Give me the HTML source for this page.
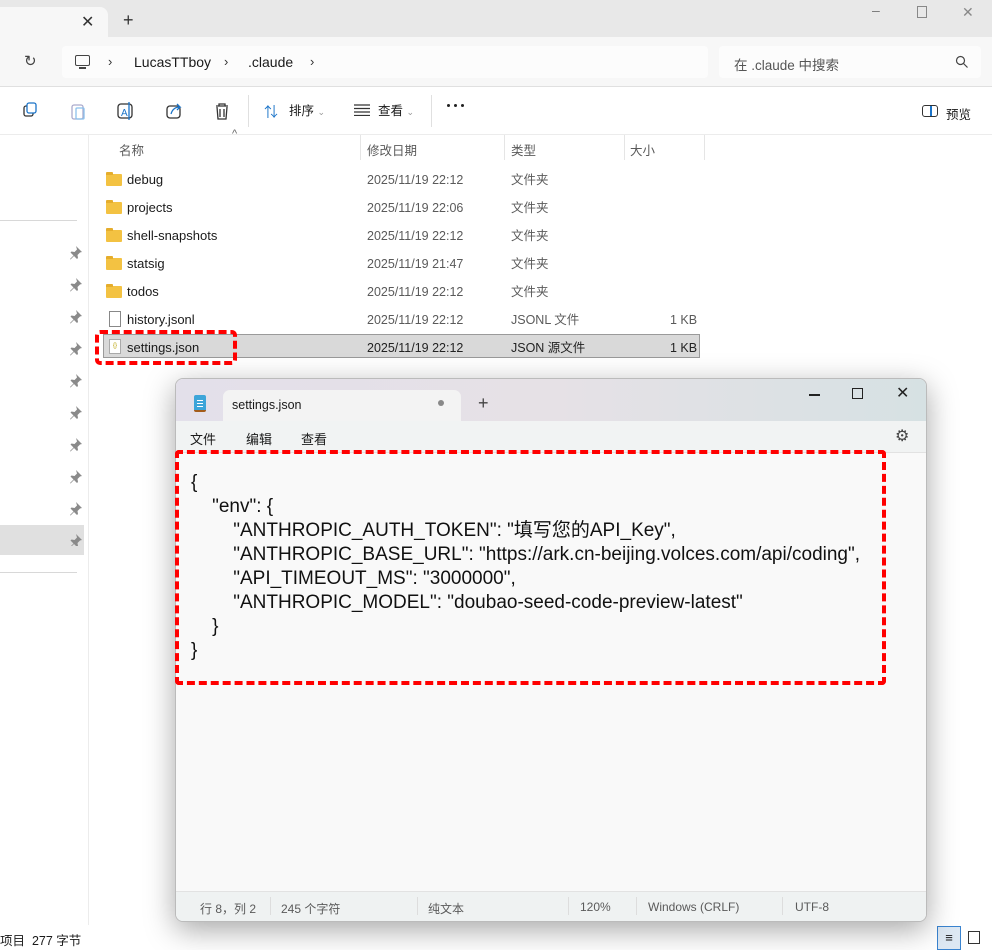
<!DOCTYPE html>
<html><head><meta charset="utf-8"><style>
*{margin:0;padding:0;box-sizing:border-box}
body{width:992px;height:950px;position:relative;overflow:hidden;background:#fff;font-family:"Liberation Sans","Noto Sans CJK SC",sans-serif;color:#1a1a1a;font-size:12px}
.a{position:absolute;white-space:nowrap}
.g{color:#5a5a5a}
.fold{position:absolute;left:106px;width:16px;height:12px;background:#f3c242;border-radius:1px}
.fold:before{content:"";position:absolute;left:0;top:-2px;width:7px;height:3px;background:#e5ad2c;border-radius:1px 1px 0 0}
.pin{position:absolute;left:70px}
.code{position:absolute;font-size:19px;color:#111;font-family:"Liberation Sans","Noto Sans CJK SC",sans-serif}
</style></head><body>
<!-- tab bar -->
<div class="a" style="left:0;top:0;width:992px;height:37px;background:#e8e8e8"></div>
<div class="a" style="left:0;top:7px;width:108px;height:31px;background:#f7f7f7;border-radius:0 8px 0 0"></div>
<div class="a" style="left:81px;top:12px;font-size:16px;color:#333">✕</div>
<div class="a" style="left:123px;top:10px;font-size:18px;color:#333">+</div>
<div class="a" style="left:872px;top:2px;font-size:14px;color:#777">–</div>
<div class="a" style="left:917px;top:6px;width:10px;height:12px;border:1px solid #888"></div>
<div class="a" style="left:962px;top:4px;font-size:14px;color:#888">✕</div>
<!-- address -->
<div class="a" style="left:0;top:37px;width:992px;height:50px;background:#f7f7f7;border-bottom:1px solid #e0e0e0"></div>
<div class="a" style="left:24px;top:52px;font-size:15px;color:#444">↻</div>
<div class="a" style="left:62px;top:46px;width:646px;height:32px;background:#fcfcfc;border-radius:4px"></div>
<div class="a" style="left:75px;top:55px;width:15px;height:11px;border:1.3px solid #444;border-radius:2px"></div>
<div class="a" style="left:79px;top:67px;width:7px;height:2px;background:#444"></div>
<div class="a" style="left:108px;top:54px;font-size:13px;color:#333">›</div>
<div class="a" style="left:134px;top:54px;font-size:14px">LucasTTboy</div>
<div class="a" style="left:224px;top:54px;font-size:13px;color:#333">›</div>
<div class="a" style="left:248px;top:54px;font-size:14px">.claude</div>
<div class="a" style="left:310px;top:54px;font-size:13px;color:#333">›</div>
<div class="a" style="left:719px;top:46px;width:262px;height:32px;background:#fcfcfc;border-radius:4px"></div>
<div class="a" style="left:734px;top:54px;font-size:13.5px;color:#555">在 .claude 中搜索</div>
<svg class="a" style="left:955px;top:55px" width="14" height="14" fill="none" stroke="#444" stroke-width="1.2"><circle cx="5.5" cy="5.5" r="4"/><path d="M8.5 8.5l4 4"/></svg>
<!-- toolbar -->
<svg class="a" style="left:20px;top:101px" width="230" height="20" fill="none" stroke-width="1.3">
<rect x="4" y="5" width="9" height="10" rx="2" stroke="#333"/><rect x="7" y="2" width="9" height="10" rx="2" stroke="#1a73c8" fill="#fff"/>
<rect x="52" y="4" width="11" height="14" rx="2" stroke="#aac"/><rect x="56" y="7" width="8" height="11" rx="1" stroke="#8bc0ec"/>
<rect x="98" y="3" width="14" height="14" rx="3" stroke="#333"/><text x="101" y="15" font-size="10" fill="#1a73c8" stroke="none" font-family="Liberation Sans">A</text><line x1="109" y1="1" x2="109" y2="19" stroke="#1a73c8"/>
<rect x="147" y="5" width="13" height="12" rx="3" stroke="#333"/><path d="M151 13 q2-7 9-7 l-3-3 m3 3 l-3 3" stroke="#1a73c8"/>
<path d="M196 5h12M199 5V3h6v2M197 6l1 12h8l1-12M200 8v8M204 8v8" stroke="#333"/>
</svg>
<div class="a" style="left:248px;top:95px;width:1px;height:32px;background:#e0e0e0"></div>
<div class="a" style="left:264px;top:102px;font-size:14px;color:#1a73c8">⇅</div>
<div class="a" style="left:289px;top:103px;font-size:12.5px;line-height:16px">排序 <span style="color:#999;font-size:9px">⌄</span></div>
<svg class="a" style="left:354px;top:104px" width="16" height="12" stroke="#333" stroke-width="1.2"><path d="M0 1h16M0 4.5h16M0 8h16M0 11.5h16"/></svg>
<div class="a" style="left:378px;top:103px;font-size:12.5px;line-height:16px">查看 <span style="color:#999;font-size:9px">⌄</span></div>
<div class="a" style="left:431px;top:95px;width:1px;height:32px;background:#e0e0e0"></div>
<div class="a" style="left:447px;top:104px;width:3px;height:3px;border-radius:50%;background:#222;box-shadow:7px 0 #222,14px 0 #222"></div>
<div class="a" style="left:922px;top:105px;width:16px;height:12px;border:1.3px solid #333;border-radius:3px"></div>
<div class="a" style="left:930px;top:106px;width:1.5px;height:10px;background:#1a73c8"></div>
<div class="a" style="left:946px;top:104px;font-size:12.5px">预览</div>
<div class="a" style="left:0;top:134px;width:992px;height:1px;background:#ececec"></div>
<!-- nav pane -->
<div class="a" style="left:88px;top:135px;width:1px;height:790px;background:#ececec"></div>
<div class="a" style="left:0;top:220px;width:77px;height:1px;background:#d8d8d8"></div>
<div class="a" style="left:0;top:572px;width:77px;height:1px;background:#d8d8d8"></div>
<div class="a" style="left:0;top:525px;width:84px;height:30px;background:#e0e0e0"></div>
<svg class="a" style="left:70px;top:246px" width="12" height="300" fill="#8a8a8a">
<defs><path id="p" d="M6 0l6 6-2 0.5-2.5 2.5 0.5 3-1 1-3-3-3.5 3.5-0.5-0.5 3.5-3.5-3-3 1-1 3 0.5 2.5-2.5z"/></defs>
<use href="#p" y="0"/><use href="#p" y="32"/><use href="#p" y="64"/><use href="#p" y="96"/><use href="#p" y="128"/><use href="#p" y="160"/><use href="#p" y="192"/><use href="#p" y="224"/><use href="#p" y="256"/><use href="#p" y="288"/>
</svg>
<!-- headers -->
<div class="a" style="left:232px;top:128px;font-size:11px;color:#666">^</div>
<div class="a g" style="left:119px;top:140px;font-size:12.5px">名称</div>
<div class="a" style="left:360px;top:135px;width:1px;height:25px;background:#e5e5e5"></div>
<div class="a g" style="left:367px;top:140px;font-size:12.5px">修改日期</div>
<div class="a" style="left:504px;top:135px;width:1px;height:25px;background:#e5e5e5"></div>
<div class="a g" style="left:511px;top:140px;font-size:12.5px">类型</div>
<div class="a" style="left:624px;top:135px;width:1px;height:25px;background:#e5e5e5"></div>
<div class="a g" style="left:630px;top:140px;font-size:12.5px">大小</div>
<div class="a" style="left:704px;top:135px;width:1px;height:25px;background:#e5e5e5"></div>
<!-- rows -->
<div class="a" style="left:103px;top:334px;width:597px;height:24px;background:#d9d9d9;border:1px solid #9a9a9a"></div>
<div class="fold" style="top:174px"></div><div class="a" style="left:127px;top:172px;font-size:13px">debug</div>
<div class="fold" style="top:202px"></div><div class="a" style="left:127px;top:200px;font-size:13px">projects</div>
<div class="fold" style="top:230px"></div><div class="a" style="left:127px;top:228px;font-size:13px">shell-snapshots</div>
<div class="fold" style="top:258px"></div><div class="a" style="left:127px;top:256px;font-size:13px">statsig</div>
<div class="fold" style="top:286px"></div><div class="a" style="left:127px;top:284px;font-size:13px">todos</div>
<div class="a" style="left:109px;top:311px;width:12px;height:16px;border:1px solid #888;background:#fff"></div><div class="a" style="left:127px;top:312px;font-size:13px">history.jsonl</div>
<div class="a" style="left:109px;top:339px;width:12px;height:15px;border:1px solid #aaa;background:#fff;font-size:6px;color:#b8a000;text-align:center;line-height:13px">{}</div><div class="a" style="left:127px;top:340px;font-size:13px">settings.json</div>
<div class="a g" style="left:367px;top:173px;font-size:12.5px;line-height:14px">2025/11/19 22:12<br><br>2025/11/19 22:06<br><br>2025/11/19 22:12<br><br>2025/11/19 21:47<br><br>2025/11/19 22:12<br><br>2025/11/19 22:12<br><br><span style="color:#222">2025/11/19 22:12</span></div>
<div class="a g" style="left:511px;top:173px;font-size:12.5px;line-height:14px">文件夹<br><br>文件夹<br><br>文件夹<br><br>文件夹<br><br>文件夹<br><br>JSONL 文件<br><br><span style="color:#222">JSON 源文件</span></div>
<div class="a g" style="left:670px;top:313px;font-size:12.5px;line-height:14px">1 KB<br><br><span style="color:#222">1 KB</span></div>
<div class="a" style="left:95px;top:330px;width:142px;height:35px;border:4px dashed #f00;border-radius:5px"></div>
<!-- bottom status -->
<div class="a" style="left:0;top:930px;font-size:12.5px">项目 &nbsp;277 字节</div>
<div class="a" style="left:937px;top:926px;width:24px;height:24px;background:#dde8f3;border:1px solid #3a84d0;text-align:center;font-size:13px;line-height:22px">≡</div>
<div class="a" style="left:968px;top:931px;width:12px;height:13px;border:1.2px solid #333"></div>
<!-- notepad -->
<div class="a" style="left:175px;top:378px;width:752px;height:544px;border-radius:8px;background:#f9f9f9;box-shadow:0 8px 30px rgba(0,0,0,0.35);border:1px solid #bbb;overflow:hidden">
 <div class="a" style="left:0;top:0;width:752px;height:42px;background:linear-gradient(90deg,#e3e0ea,#e6e1e6 50%,#d6e1e3)"></div>
 <div class="a" style="left:18px;top:16px;width:12px;height:17px;background:#3da5d9;border-radius:2px;border-bottom:2px solid #a35c1a"></div>
 <div class="a" style="left:21px;top:21px;width:6px;height:1px;background:#fff;box-shadow:0 3px #fff,0 6px #fff"></div>
 <div class="a" style="left:47px;top:11px;width:238px;height:32px;background:#f3f3f3;border-radius:7px 7px 0 0"></div>
 <div class="a" style="left:56px;top:19px;font-size:12.5px">settings.json</div>
 <div class="a" style="left:262px;top:21px;width:6px;height:6px;border-radius:50%;background:#888"></div>
 <div class="a" style="left:302px;top:14px;font-size:18px;color:#444">+</div>
 <div class="a" style="left:633px;top:15px;width:11px;height:1.5px;background:#222"></div>
 <div class="a" style="left:676px;top:9px;width:11px;height:11px;border:1.3px solid #222"></div>
 <div class="a" style="left:720px;top:4px;font-size:16px;color:#222">✕</div>
 <div class="a" style="left:0;top:42px;width:752px;height:32px;background:#f1f3f3;border-bottom:1px solid #e2e2e2"></div>
 <div class="a" style="left:14px;top:50px;font-size:13px">文件</div>
 <div class="a" style="left:70px;top:50px;font-size:13px">编辑</div>
 <div class="a" style="left:125px;top:50px;font-size:13px">查看</div>
 <div class="a" style="left:719px;top:47px;font-size:16px;color:#444">⚙</div>
 <div class="code" style="left:15px;top:92px;line-height:24px;white-space:pre">{
    "env": {
        "ANTHROPIC_AUTH_TOKEN": "填写您的API_Key",
        "ANTHROPIC_BASE_URL": "https://ark.cn-beijing.volces.com/api/coding",
        "API_TIMEOUT_MS": "3000000",
        "ANTHROPIC_MODEL": "doubao-seed-code-preview-latest"
    }
}</div>
 <div class="a" style="left:0;top:512px;width:752px;height:32px;background:#eff2f2;border-top:1px solid #e2e2e2"></div>
 <div class="a g" style="left:24px;top:521px;font-size:12px">行 8，列 2</div>
 <div class="a" style="left:94px;top:518px;width:1px;height:18px;background:#ddd"></div>
 <div class="a g" style="left:105px;top:521px;font-size:12px">245 个字符</div>
 <div class="a" style="left:241px;top:518px;width:1px;height:18px;background:#ddd"></div>
 <div class="a g" style="left:252px;top:521px;font-size:12px">纯文本</div>
 <div class="a" style="left:392px;top:518px;width:1px;height:18px;background:#ddd"></div>
 <div class="a g" style="left:404px;top:521px;font-size:12px">120%</div>
 <div class="a" style="left:460px;top:518px;width:1px;height:18px;background:#ddd"></div>
 <div class="a g" style="left:472px;top:521px;font-size:12px">Windows (CRLF)</div>
 <div class="a" style="left:606px;top:518px;width:1px;height:18px;background:#ddd"></div>
 <div class="a g" style="left:619px;top:521px;font-size:12px">UTF-8</div>
</div>
<div class="a" style="left:175px;top:450px;width:711px;height:235px;border:4px dashed #f00;border-radius:4px"></div>
</body></html>
